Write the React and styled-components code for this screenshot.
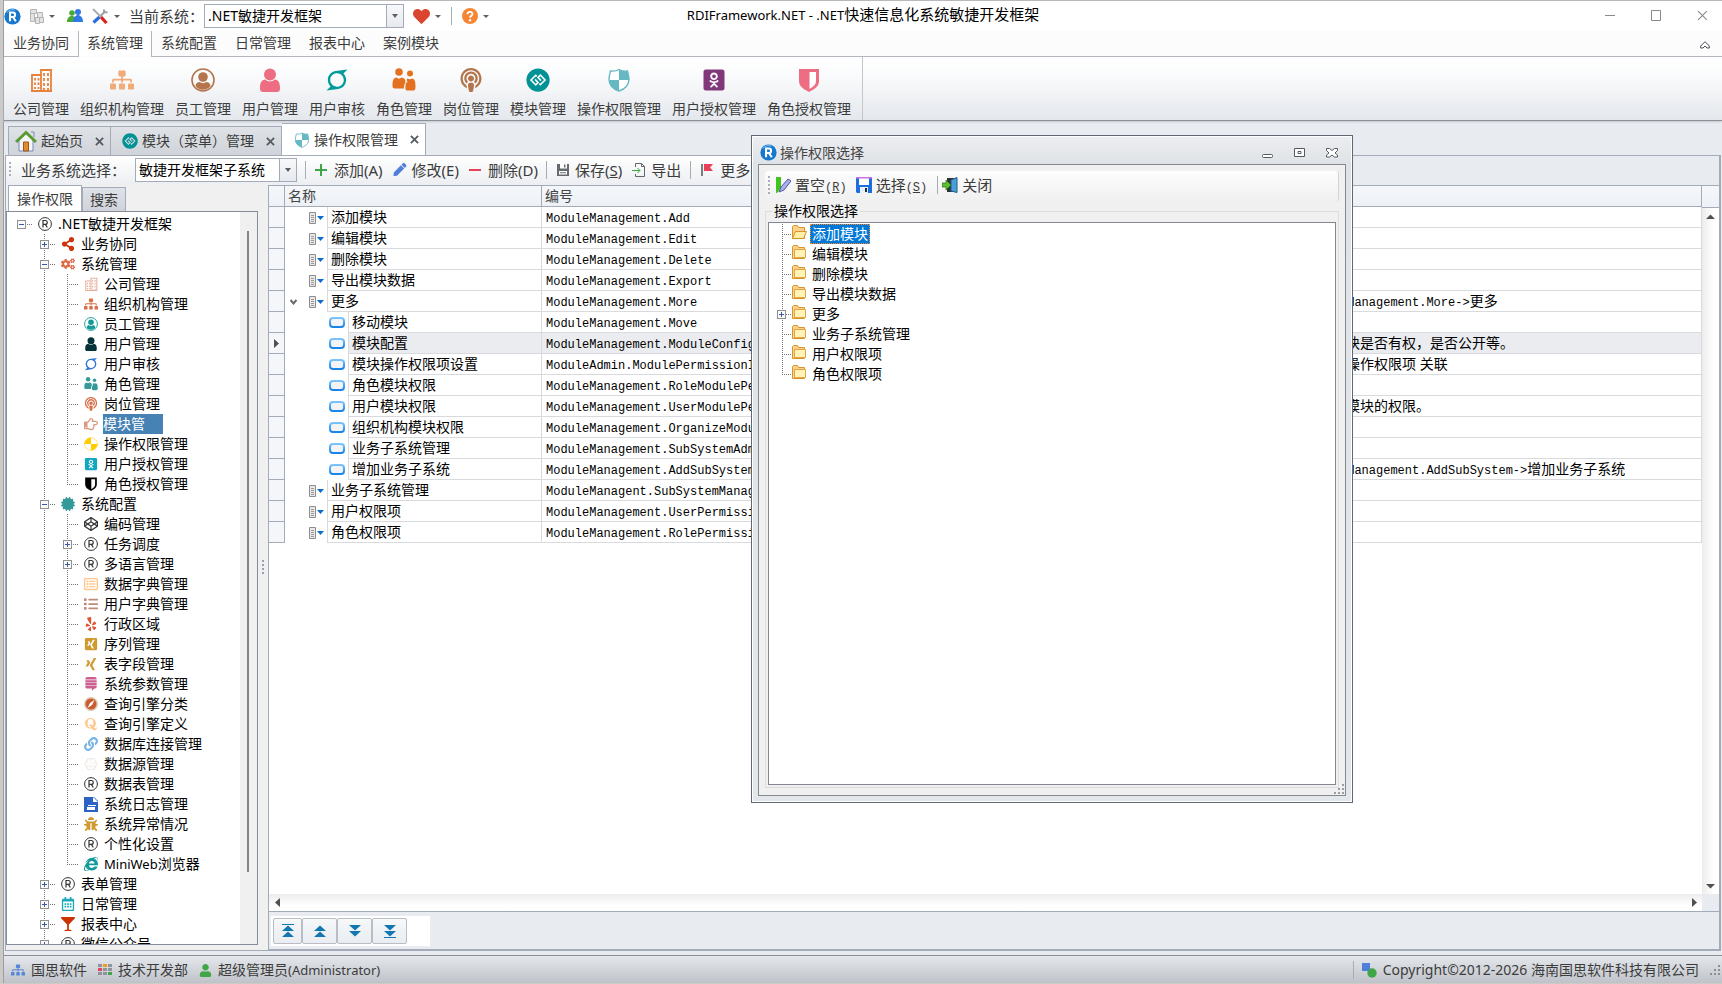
import React, { useState } from 'react';
import styled, { createGlobalStyle, css } from 'styled-components';
import {
  FaShareAlt, FaCogs, FaSitemap, FaUser, FaPodcast, FaRegHandPointRight,
  FaOdnoklassnikiSquare, FaCertificate, FaCodepen, FaRegListAlt, FaList, FaYelp,
  FaXingSquare, FaXing, FaStackExchange, FaQuora, FaLink, FaConnectdevelop, FaBug,
  FaInternetExplorer, FaRegCalendarAlt, FaGlassMartini, FaGgCircle, FaSuperpowers, FaHeart,
  FaPen,
} from 'react-icons/fa';

const latin = "'Noto Sans', 'Noto Sans CJK SC', sans-serif";
const mono = "'Liberation Mono', 'Noto Sans CJK SC', monospace";

const GlobalStyle = createGlobalStyle`
  * { box-sizing: border-box; }
  body {
    margin: 0;
    background: #cbcac7;
    color: #000;
    font: 14px/20px ${latin};
  }
  button, select { font: inherit; color: inherit; }
  button { padding: 0; border: 0; background: none; white-space: nowrap; }
  ul { margin: 0; padding: 0; list-style: none; }
`;

const Frame = styled.div`
  height: 100vh;
  padding: 0 0 1px 3px;
`;
const Window = styled.div`
  position: relative;
  display: flex;
  flex-direction: column;
  height: 100%;
  border-top: 1px solid #b9b9b9;
  border-left: 1px solid #9a9da3;
  background: #e8ebf0;
`;
const Small = styled.span`
  font-size: 13px;
`;

/* ---------- title bar ---------- */
const TitleBar = styled.header`
  display: grid;
  grid-template-columns: 1fr auto 1fr;
  align-items: center;
  flex: none;
  height: 30px;
  background: #fff;
`;
const QuickBar = styled.div`
  display: flex;
  align-items: center;
  color: #3c3c3c;
  font-size: 15px;
`;
const QuickButton = styled.button`
  display: flex;
  align-items: center;
  gap: 5px;
  margin-right: ${p => p.$after || 0}px;
`;
const Title = styled.h1`
  margin: 0;
  font-size: 15px;
  font-weight: 400;
  line-height: 26px;
  align-self: start;
`;
const WindowButtons = styled.div`
  display: flex;
  justify-content: flex-end;
  gap: 30px;
  padding-right: 12px;

  button { width: 16px; }
`;
const Divider = styled.span`
  flex: none;
  width: 1px;
  height: ${p => p.$h || 18}px;
  margin: 0 ${p => p.$gap || 9}px;
  background: #a9adb3;
`;
const Arrow = styled.span`
  border: 3px solid transparent;
  border-top-color: #5c5f66;
  border-bottom: 0;
`;

const ComboBox = styled.span`
  display: flex;
  align-items: stretch;
  position: relative;
  width: ${p => p.$w}px;
  height: 24px;
  border: 1px solid #a3abb8;
  background: #fff;
  color: #000;
  font-size: 14px;

  select {
    flex: 1;
    padding: 0 3px;
    border: 0;
    background: transparent;
    appearance: none;
    outline: none;
    line-height: 22px;
  }
  &::before {
    content: '';
    position: absolute;
    right: 0;
    width: 16px;
    height: 100%;
    border-left: 1px solid #a3abb8;
    background: linear-gradient(#f7f8fa, #e6e9ee);
  }
  &::after {
    content: '';
    position: absolute;
    right: 5px;
    top: 9px;
    border: 3px solid transparent;
    border-top: 4px solid #5c5f66;
    border-bottom: 0;
  }
`;

/* ---------- ribbon ---------- */
const RibbonTabs = styled.nav`
  display: flex;
  flex: none;
  height: 26px;
  border-bottom: 1px solid #b2b5bc;
  background: #fcfcfc;
  color: #3c3c3c;
`;
const RibbonTab = styled.button`
  width: 74px;
  height: 26px;
  padding-bottom: 2px;
  border: 1px solid transparent;
  border-width: 0 1px;
  line-height: 24px;
  ${p => p.$active && css`
    border-color: #b2b5bc;
    background: #fff;
  `}
`;
const Collapse = styled.button`
  margin-left: auto;
  padding-right: 12px;
`;
const Ribbon = styled.div`
  display: flex;
  flex: none;
  height: 64px;
  border-bottom: 1px solid #8b9098;
  background: linear-gradient(#fff, #fafbfc 30%, #e4e7ec);
  box-shadow: 0 1px 2px #c3c6cc;
  color: #3c3c3c;
`;
const RibbonGroup = styled.div`
  display: flex;
  gap: 11px;
  padding: 0 11px 0 9px;
  border-right: 1px solid #c3c7cd;
`;
const RibbonItem = styled.button`
  display: flex;
  flex-direction: column;
  align-items: center;
  padding-top: 11px;
  gap: 7px;
`;

/* ---------- document tabs ---------- */
const DocTabs = styled.div`
  display: flex;
  align-items: flex-end;
  flex: none;
  height: 34px;
  padding-left: 4px;
  color: #3c3c3c;
`;
const DocTab = styled.div`
  display: flex;
  align-items: center;
  height: ${p => (p.$active ? 32 : 29)}px;
  padding: 0 6px 0 ${p => p.$pad}px;
  border: 1px solid #a3abb8;
  border-bottom: 0;
  border-left-width: ${p => (p.$first ? 1 : 0)}px;
  background: ${p => (p.$active ? '#fff' : 'linear-gradient(#dfe2e7, #d0d4da)')};

  > button:first-child { display: flex; align-items: center; gap: 4px; }
`;
const CloseTab = styled.button`
  display: flex;
  margin-left: 12px;
`;
const Document = styled.main`
  display: flex;
  flex-direction: column;
  flex: 1;
  min-height: 0;
  margin: 0 1px 2px 1px;
  border: 1px solid #a3abb8;
  border-right-width: 2px;
`;
const ToolBar = styled.div`
  display: flex;
  align-items: center;
  flex: none;
  width: 64%;
  height: 29px;
  padding-bottom: 2px;
  background: linear-gradient(#fff, #eceef1);
  color: #3c3c3c;
  font-size: 15px;
`;
const Grip = styled.span`
  flex: none;
  width: 2px;
  height: 15px;
  margin: 0 10px 0 3px;
  background: repeating-linear-gradient(#a9adb5 0 2px, transparent 2px 4px);
`;
const ToolButton = styled.button`
  display: flex;
  align-items: center;
  gap: 4px;
  margin-right: ${p => (p.$last ? 0 : 9)}px;

  svg { min-width: 16px; }
`;
const Split = styled.div`
  display: flex;
  flex: 1;
  min-height: 0;
`;

/* ---------- left panel ---------- */
const Side = styled.aside`
  display: flex;
  flex-direction: column;
  flex: none;
  width: 252px;
  padding-bottom: 5px;
  background: #f0f0f0;
`;
const SideTabs = styled.div`
  display: flex;
  align-items: flex-end;
  flex: none;
  height: 26px;
  padding-left: 2px;
  color: #3c3c3c;
`;
const SideTab = styled.button`
  height: ${p => (p.$active ? 26 : 24)}px;
  padding: 0 ${p => (p.$active ? 8 : 7)}px;
  border: 1px solid #a3abb8;
  border-bottom: 0;
  background: ${p => (p.$active ? '#fff' : 'linear-gradient(#dfe2e7, #cfd3d9)')};
`;
const TreeBox = styled.div`
  display: flex;
  flex: 1;
  min-height: 0;
  border: 1px solid #868b99;
  background: #fff;
  overflow: hidden;
`;
const Tree = styled.ul`
  flex: 1;
  padding: 2px 0 0 3px !important;
`;
const TreeScroll = styled.div`
  width: 17px;
  padding: 19px 0 72px 7px;
  background: #f0f0f0;

  &::before {
    content: '';
    display: block;
    width: 2px;
    height: 100%;
    background: #858585;
  }
`;
const Row = styled.li`
  display: flex;
  height: 20px;
  white-space: nowrap;
`;
const dots = dir => `repeating-linear-gradient(${dir}, #777 0 1px, transparent 1px 2px)`;
const Guide = styled.span`
  display: flex;
  align-items: center;
  justify-content: center;
  flex: none;
  width: ${p => p.$w || 23}px;
  background:
    ${dots('to bottom')} 11px 0 / 1px ${p => p.$v || 0} no-repeat,
    ${dots('to right')} 11px 10px / ${p => (p.$h ? '100%' : '0')} 1px no-repeat;
`;
const TreeIcon = styled.span`
  display: flex;
  align-items: center;
  justify-content: center;
  flex: none;
  width: 23px;
  color: ${p => p.$color};
`;
const TreeLabel = styled.span`
  margin-left: 2px;
  ${p => p.$selected && css`
    width: 60px;
    margin-left: 1px;
    background: #4682b4;
    color: #fff;
  `}
`;
const Expander = styled.button`
  display: flex;
  align-items: center;
  justify-content: center;
  width: 9px;
  height: 9px;
  border: 1px solid #919191;
  background: #fafafa;
`;
const Splitter = styled.div`
  display: flex;
  align-items: center;
  justify-content: center;
  flex: none;
  width: 10px;
  background: #f0f0f0;

  &::before {
    content: '';
    width: 2px;
    height: 15px;
    background: repeating-linear-gradient(#9aa1ae 0 2px, transparent 2px 4px);
  }
`;

/* ---------- grid ---------- */
const GridPane = styled.section`
  display: flex;
  flex-direction: column;
  flex: 1;
  min-width: 0;
  border-left: 1px solid #a3abb8;
  border-top: 1px solid #a3abb8;
`;
const GridBody = styled.div`
  display: flex;
  flex: 1;
  min-height: 0;
  background: #fff;
`;
const Table = styled.table`
  flex: 1;
  align-self: flex-start;
  width: 0;
  table-layout: fixed;
  border-collapse: separate;
  border-spacing: 0;
  line-height: 16px;

  th, td { height: 21px; padding: 0; overflow: hidden; white-space: nowrap; text-align: left; }
  th {
    padding-left: 3px;
    border: 1px solid #a3abb8;
    border-width: 0 1px 1px 0;
    background: linear-gradient(#f5f7fa, #edf1f6);
    color: #444;
    font-weight: 400;
  }
`;
const Indicator = styled.td`
  border: 1px solid #a3abb8;
  border-width: 0 1px 1px 0;
  background: #f5f6f9;

  svg { display: block; margin: 0 auto; }
`;
const NameCell = styled.div`
  display: flex;
  height: 21px;
`;
const NameLead = styled.span`
  display: flex;
  align-items: center;
  justify-content: flex-end;
  flex: none;
  gap: 12px;
  width: ${p => (p.$child ? 63 : 42)}px;
  padding-right: 3px;
`;
const NameText = styled.span`
  flex: 1;
  padding-left: 3px;
  border: 1px solid #d8dade;
  border-width: 0 1px 1px 1px;
  background: ${p => (p.$selected ? '#ebecef' : '#fff')};
  line-height: 19px;
`;
const DataCell = styled.td`
  padding-left: 4px !important;
  border: 1px solid #d8dade;
  border-width: 0 1px 1px 0;
  background: ${p => (p.$selected ? '#ebecef' : '#fff')};
`;
const Code = styled.span`
  font-family: ${mono};
  font-size: 12px;
  line-height: 12px;
`;
const VScroll = styled.div`
  display: flex;
  flex-direction: column;
  align-items: center;
  flex: none;
  width: 17px;
  padding-bottom: 3px;
  background: linear-gradient(to right, #ececec, #fff 70%);

  &::before {
    content: '';
    flex: none;
    width: 17px;
    height: 21px;
    margin-bottom: 4px;
    border-bottom: 1px solid #a3abb8;
    background: linear-gradient(#f5f7fa, #edf1f6);
  }
  svg:last-child { margin-top: auto; }
`;
const HScroll = styled.div`
  display: flex;
  align-items: center;
  justify-content: space-between;
  flex: none;
  height: 18px;
  padding: 0 20px 0 4px;
  border-bottom: 1px solid #a3abb8;
  background:
    linear-gradient(#e8ebf0, #e8ebf0) right / 17px 100% no-repeat,
    linear-gradient(#ececec, #fff 70%);
`;
const Pager = styled.div`
  flex: none;
  padding: 4px 2px 3px;
  border-bottom: 1px solid #a3abb8;
`;
const PagerBox = styled.div`
  display: flex;
  width: 159px;
  padding: 2px;
  background: #fff;
`;
const PagerButton = styled.button`
  display: flex;
  align-items: center;
  justify-content: center;
  width: ${p => (p.$first ? 29 : 35)}px;
  height: 26px;
  border: 1px solid #b9bec5;
  border-radius: 2px;
  background: linear-gradient(#f6f8fa, #e9edf1);
`;

/* ---------- status bar ---------- */
const StatusBar = styled.footer`
  display: flex;
  align-items: center;
  flex: none;
  height: 28px;
  margin-top: 2px;
  padding: 1px 1px 0 7px;
  border-top: 1px solid #8b9098;
  background: linear-gradient(#e4e7eb, #bfc3c9);
  color: #3c3c3c;
`;
const StatusItem = styled.span`
  display: flex;
  align-items: center;
  gap: 6px;
  margin-right: ${p => p.$after || 0}px;
  margin-left: ${p => (p.$right ? 'auto' : 0)};
`;

/* ---------- dialog ---------- */
const Dialog = styled.section`
  position: absolute;
  left: 747px;
  top: 134px;
  display: flex;
  flex-direction: column;
  width: 602px;
  height: 668px;
  padding: 0 6px 6px;
  border: 1px solid #5f6873;
  background: linear-gradient(#eceef1, #dfe2e6 28px, #e3e6ea);
  box-shadow: inset 0 0 0 1px #fff;
`;
const DialogTitle = styled.div`
  display: flex;
  align-items: center;
  flex: none;
  height: 28px;
  padding: 5px 8px 0 2px;
  gap: 3px;
  color: #444;

  h2 { margin: 0 auto 0 0; font-size: 14px; font-weight: 400; }
`;
const DialogButton = styled.button`
  display: flex;
  margin-left: 17px;
`;
const DialogBody = styled.div`
  position: relative;
  display: flex;
  flex-direction: column;
  flex: 1;
  min-height: 0;
  padding: 6px 6px 7px;
  border: 1px solid #848990;
  background: #f0f0f0;
`;
const SizeGrip = styled.svg`
  position: absolute;
  right: 1px;
  bottom: 1px;
`;
const DialogTools = styled.div`
  display: flex;
  align-items: center;
  flex: none;
  height: 30px;
  padding-bottom: 2px;
  border-right: 1px solid #d0d2d5;
  border-radius: 3px;
  background: linear-gradient(#fdfdfd, #f0f0f0);
  color: #3c3c3c;
  font-size: 15px;

  ${Grip} { height: 19px; margin-right: 5px; }
  ${Divider} { margin: 0 4px 0 1px; }
`;
const Group = styled.fieldset`
  display: flex;
  flex: 1;
  min-width: 0;
  margin: 0;
  padding: 1px 2px 2px;
  border: 1px solid #dcdcdc;

  legend { margin-left: 4px; padding: 0 2px; line-height: 20px; }
`;
const DialogTree = styled.ul`
  flex: 1;
  padding: 1px 0 0 2px !important;
  border: 1px solid #828790;
  background: #fff;
`;
const DialogLabel = styled.span`
  margin-left: 3px;
  padding: 0 2px;
  ${p => p.$selected && css`
    background: #0078d7;
    color: #fff;
    outline: 1px dotted #ff8728;
    outline-offset: -1px;
  `}
`;

/* ---------- drawings ---------- */
const Logo = ({ size = 17 }) => (
  <svg width={size} height={size} viewBox="0 0 18 18">
    <circle cx="9" cy="9" r="8.6" fill="#1677cf" />
    <path d="M3 5a7 7 0 0 1 9-2.600" stroke="#7cc0f5" fill="none" />
    <path d="M6.400 14V4.800h3a2.300 2.300 0 0 1 0 4.700H7.500m2 0L12.500 14" fill="none" stroke="#fff" strokeWidth="2.200" />
  </svg>
);
const People = () => (
  <svg width="16" height="14" viewBox="0 0 16 14">
    <circle cx="5" cy="4" r="2.800" fill="#49a832" /><path d="M0 13c0-5 3-6 5-6s4 1 4 6z" fill="#49a832" />
    <circle cx="11" cy="3" r="3" fill="#2f7ae5" /><path d="M6 13c0-5 3-7 5-7s5 2 5 7z" fill="#2f7ae5" />
  </svg>
);
const Blocks = () => (
  <svg width="14" height="15" viewBox="0 0 14 15" fill="#e3e3e3" stroke="#b5b5b5">
    <path d="M.5.5h6v4h-6zM.5 4.500h4v8h-4zM7.500 3.500h5v5h-5zM5.500 8.500h4v6h-4zM9.500 8.500h4v5h-4z" />
  </svg>
);
const Tools = () => (
  <svg width="17" height="16" viewBox="0 0 17 16" fill="none">
    <path d="M1.500 14.500 7.500 9" stroke="#2b6ce0" strokeWidth="3.200" />
    <path d="M8 8.500l4.500-4.500M12 1.500v2.800h3.500" stroke="#9aa0a5" strokeWidth="2" />
    <path d="M1 1l8 8" stroke="#a8acb0" strokeWidth="2" /><path d="M9 9l5.500 6" stroke="#d8241c" strokeWidth="3.200" />
  </svg>
);
const Help = () => (
  <svg width="16" height="16" viewBox="0 0 16 16">
    <circle cx="8" cy="8" r="8" fill="#f58634" />
    <path d="M5.500 6.200c0-3 5-3 5-.200 0 1.800-2.500 1.700-2.500 3.700" fill="none" stroke="#fff" strokeWidth="1.800" />
    <circle cx="8" cy="12.200" r="1.200" fill="#fff" />
  </svg>
);
const Building = () => (
  <svg width="1em" height="1em" viewBox="0 0 24 24" fill="none" stroke="currentColor" strokeWidth="1.800">
    <path d="M3 23V7h9m0 16V2h10v21M2 23h21" />
    <path d="M15 5v3m4-3v3m-4 2v3m4-3v3m-4 2v3m4-3v3M6 10v2.500m3.500-2.500v2.500M6 14.500V17m3.500-2.500V17M6 19v2m3.500-2v2m5.500-1v3m4-3v3" />
  </svg>
);
const UserRing = () => (
  <svg width="1em" height="1em" viewBox="0 0 24 24">
    <circle cx="12" cy="12" r="11" fill="none" stroke="currentColor" strokeWidth="1.600" />
    <circle cx="12" cy="9" r="4.800" fill="currentColor" />
    <path d="M4.500 18c.5-3 2-4 4-4 2 1.500 5 1.500 7 0 2 0 3.500 1 4 4-4 5-11 5-15 0z" fill="currentColor" />
  </svg>
);
const UserBust = () => (
  <svg width="1em" height="1em" viewBox="0 0 24 24" fill="currentColor">
    <circle cx="12" cy="6.500" r="6" /><path d="M2 20c0-6 2-8 5-8.500 3 2.500 7 2.500 10 0 3 .5 5 2.500 5 8.500 0 3-1 4-3 4H5c-2 0-3-1-3-4z" />
  </svg>
);
const Pair = () => (
  <svg width="1em" height="1em" viewBox="0 0 24 24" fill="currentColor">
    <circle cx="7" cy="4" r="3.800" /><path d="M.5 18c0-6 1-8 4-8.500 2 1.500 3 1.500 5 0 3 .5 4 2 4 5-1 1-1.500 3-1.500 6H3c-2 0-2.500-1-2.500-2.500z" />
    <circle cx="18" cy="5.500" r="3" /><path d="M13.500 21c0-5 0-6 2-7-1-1-1-3 0-3.500 2 1 3 1 4.500 0 3 .5 3.500 3 3.500 8.500 0 3-1 3.500-3 3.500h-4.500c-1.500 0-2.500 0-2.500-1.500z" />
  </svg>
);
const QuarterShield = () => (
  <svg width="1em" height="1em" viewBox="0 0 24 24">
    <path d="M12 1.500c2.500 1.500 5 2 8.500 1.500.5 3 1.500 5 1.500 8 0 6-4 10-10 12C6 21 2 17 2 11c0-3 1-5 1.500-8 3.500.5 6 0 8.500-1.500z" fill="#fff" stroke="currentColor" strokeWidth="1.400" />
    <path d="M12 1.500c2.500 1.500 5 2 8.500 1.500.5 3 1.500 5 1.500 9H12zM2 12h10v11C6 21 2 17 2 12z" fill="currentColor" />
  </svg>
);
const HalfShield = () => (
  <svg width="1em" height="1em" viewBox="0 0 24 24">
    <path d="M2 1h20v12c0 5-4 8-10 11C6 21 2 18 2 13z" fill="currentColor" />
    <path d="M12.500 4H19v9c0 3-2 5.500-6.500 8z" fill="#fff" />
  </svg>
);
const QuarterBall = () => (
  <svg width="14" height="14" viewBox="0 0 14 14">
    <circle cx="7" cy="7" r="6.400" fill="#fff" stroke="#ffe27a" />
    <path d="M7 7V.500A6.500 6.500 0 0 0 .5 7zM7 7v6.500A6.500 6.500 0 0 0 13.500 7z" fill="#fc0" />
  </svg>
);
const Compass = () => (
  <svg width="14" height="14" viewBox="0 0 14 14">
    <circle cx="7" cy="7" r="6.200" fill="#cc5a33" stroke="#d9c9ae" strokeWidth="1.400" />
    <path d="M10.500 3 8 8l-4.500 3L6 6z" fill="#fff" />
  </svg>
);
const Registered = () => (
  <svg width="14" height="14" viewBox="0 0 14 14" fill="none" stroke="#333">
    <circle cx="7" cy="7" r="6.400" />
    <path d="M5 10.500v-7h2.300a1.900 1.900 0 0 1 0 3.900H5m2.300 0 2 3.100" strokeWidth="1.200" />
  </svg>
);
const LogFile = () => (
  <svg width="14" height="15" viewBox="0 0 14 15">
    <path d="M0 0h10l4 4v11H0z" fill="#2d62c4" /><path d="M9 0v5h5z" fill="#fff" /><path d="M4 8h8v1H4zM3 10h8v3H3z" fill="#fff" />
  </svg>
);
const House = () => (
  <svg width="22" height="22" viewBox="0 0 22 22">
    <path d="M4 10v11h14V10l-7-7z" fill="#f3f5fa" stroke="#7a88bb" />
    <path d="M8.500 12h5v9h-5z" fill="#e58a2c" stroke="#9a5a14" />
    <path d="M1 12 11 2.500 21 12" fill="none" stroke="#5b9a2f" strokeWidth="3" /><path d="M16 2h3v5" stroke="#7a88bb" fill="none" />
  </svg>
);
const Cross = ({ thin }) => (
  <svg width={thin ? 11 : 9} height={thin ? 11 : 9} viewBox="0 0 10 10">
    <path d="M1 1l8 8M9 1 1 9" stroke={thin ? '#8a8a8a' : '#555a62'} strokeWidth={thin ? 1 : 2} />
  </svg>
);
const Plus = () => <svg width="14" height="14"><path d="M1 7h12M7 1v12" stroke="#3fa648" strokeWidth="2" /></svg>;
const Minus = () => <svg width="14" height="14"><path d="M1 7h12" stroke="#e9415a" strokeWidth="2" /></svg>;
const SaveIcon = () => (
  <svg width="16" height="14" viewBox="0 0 16 14">
    <path d="M2 1h12v12H2z" fill="#666a70" /><path d="M5 1h7v4.500H5zM4 8h8v3.500H4z" fill="#fff" /><path d="M9 1.500h1.500v3H9zM5 9.300h6v1H5z" fill="#666a70" />
  </svg>
);
const ExportIcon = () => (
  <svg width="16" height="16" fill="none">
    <path d="M4.500 5V1.500h6l3 3v10h-9V12" stroke="#666" /><path d="M10.500 1.500v3h3" stroke="#666" />
    <path d="M1 8.500h8M6.500 6 9 8.500 6.500 11" stroke="#3fa648" />
  </svg>
);
const Flag = () => (
  <svg width="14" height="14"><path d="M2 1v12" stroke="#555" strokeWidth="1.500" /><path d="M4 1h9l-3 3.500L13 8H4z" fill="#e9415a" /></svg>
);
const MenuIcon = () => (
  <svg width="15" height="12" viewBox="0 0 15 12">
    <path d="M.5.5h6v11h-6z" fill="#e9e9e9" stroke="#8d8d8d" /><path d="M2 3.500h3M2 5.500h3M2 7.500h3M2 9.500h3" stroke="#9a9a9a" />
    <path d="M8 4h7l-3.500 4z" fill="#0a6ccf" />
  </svg>
);
const PillIcon = () => (
  <svg width="16" height="11" viewBox="0 0 16 11">
    <defs>
      <linearGradient id="pill" x2="0" y2="1"><stop stopColor="#7cc4fb" /><stop offset="1" stopColor="#1683e8" /></linearGradient>
    </defs>
    <rect x="1" y="1" width="14" height="9" rx="3" fill="#f2f4f7" stroke="url(#pill)" strokeWidth="2" />
  </svg>
);
const Triangle = ({ dir }) => {
  const d = { up: 'M0 7l4.500-4.500L9 7z', down: 'M0 2h9L4.500 6.500z', left: 'M7 0v9L2 4.500z', right: 'M2 0v9l5-4.500z' }[dir];
  return <svg width="9" height="9" viewBox="0 0 9 9"><path d={d} fill="#505050" /></svg>;
};
const PagerIcon = ({ end, down }) => (
  <svg width="12" height="14" viewBox="0 0 12 14" fill="#1377b0">
    <g transform={down ? 'rotate(180 6 7)' : undefined}>
      {end && <path d="M0 0h12v1H0z" />}
      <path d="M6 1.500l6 5.500H0zM6 7.500l6 5.500H0z" />
    </g>
  </svg>
);
const Folder = ({ open }) => (
  <svg width="16" height="16" viewBox="0 0 16 16">
    <path d="M1.500 14.500v-12l1-1h4l1 2h6v11z" fill="#ffd08a" stroke="#d8942f" />
    {open
      ? <path d="M1.500 14.500l3-7h11l-3 7z" fill="#fff0a8" stroke="#d8942f" />
      : <path d="M3.500 5.500h11v8h-11z" fill="#fff3b8" stroke="#e0a646" />}
  </svg>
);
const ClearIcon = () => (
  <svg width="16" height="17" viewBox="0 0 16 17">
    <path d="M1 0h5v11l-4 5H1z" fill="#43c41c" /><path d="M4 15l2-5 7-8 3 2-7 9z" fill="#aab0ec" stroke="#5357a5" />
  </svg>
);
const Floppy = () => (
  <svg width="16" height="16" viewBox="0 0 16 16">
    <path d="M0 0h16v16H1l-1-1z" fill="#1d6fe0" /><path d="M3 1h10v7H3z" fill="#fff" /><path d="M0 0h16v1.500H0z" fill="#c774e8" />
    <path d="M4 10h8v6H4z" fill="#e8eefb" /><path d="M9 11h2v4H9z" fill="#134" />
  </svg>
);
const ExitIcon = () => (
  <svg width="16" height="16" viewBox="0 0 16 16">
    <path d="M5 1h10v14H5z" fill="#333" /><path d="M9 3l6-2.500v15L9 14z" fill="#4a9fd8" stroke="#1e5c8a" />
    <path d="M0 6h4V3l5 5-5 5v-3H0z" fill="#5cc12e" stroke="#2c6e12" strokeWidth=".7" />
  </svg>
);
const gripDots = 'M8 0h2v2H8zM4 4h2v2H4zM8 4h2v2H8zM0 8h2v2H0zM4 8h2v2H4zM8 8h2v2H8z';

/* ---------- data ---------- */
const ribbonTabs = ['业务协同', '系统管理', '系统配置', '日常管理', '报表中心', '案例模块'];

const ribbonItems = [
  ['公司管理', Building, '#e8823a'],
  ['组织机构管理', FaSitemap, '#f0ab78'],
  ['员工管理', UserRing, '#b4744c'],
  ['用户管理', UserBust, '#ed6d82'],
  ['用户审核', FaSuperpowers, '#009a9a'],
  ['角色管理', Pair, '#e4711f'],
  ['岗位管理', FaPodcast, '#b4744c'],
  ['模块管理', FaGgCircle, '#009294'],
  ['操作权限管理', QuarterShield, '#66b9c2'],
  ['用户授权管理', FaOdnoklassnikiSquare, '#80387a'],
  ['角色授权管理', HalfShield, '#ed6d82'],
];

// [level, label, icon, colour, expander, last child]
const tree = [
  [0, '.NET敏捷开发框架', Registered, '#333', '-'],
  [1, '业务协同', FaShareAlt, '#d0340f', '+'],
  [1, '系统管理', FaCogs, '#e06a48', '-'],
  [2, '公司管理', Building, '#e6b09c'],
  [2, '组织机构管理', FaSitemap, '#d8704a'],
  [2, '员工管理', UserRing, '#139a9a'],
  [2, '用户管理', UserBust, '#053238'],
  [2, '用户审核', FaSuperpowers, '#2f7ad0'],
  [2, '角色管理', Pair, '#339999'],
  [2, '岗位管理', FaPodcast, '#d8704a'],
  [2, '模块管', FaRegHandPointRight, '#dc9a80'],
  [2, '操作权限管理', QuarterBall, '#fc0'],
  [2, '用户授权管理', FaOdnoklassnikiSquare, '#14a5c0'],
  [2, '角色授权管理', HalfShield, '#000', '', true],
  [1, '系统配置', FaCertificate, '#339999', '-'],
  [2, '编码管理', FaCodepen, '#333'],
  [2, '任务调度', Registered, '#333', '+'],
  [2, '多语言管理', Registered, '#333', '+'],
  [2, '数据字典管理', FaRegListAlt, '#ffc68c'],
  [2, '用户字典管理', FaList, '#bf8a7a'],
  [2, '行政区域', FaYelp, '#dd5533'],
  [2, '序列管理', FaXingSquare, '#cf9a30'],
  [2, '表字段管理', FaXing, '#cf9a30'],
  [2, '系统参数管理', FaStackExchange, '#cc5f90'],
  [2, '查询引擎分类', Compass, '#cc5530'],
  [2, '查询引擎定义', FaQuora, '#ffc68c'],
  [2, '数据库连接管理', FaLink, '#79b4e6'],
  [2, '数据源管理', FaConnectdevelop, '#e4dcd6'],
  [2, '数据表管理', Registered, '#333'],
  [2, '系统日志管理', LogFile, '#2d62c4'],
  [2, '系统异常情况', FaBug, '#cf9a30'],
  [2, '个性化设置', Registered, '#333'],
  [2, <><Small>MiniWeb</Small>浏览器</>, FaInternetExplorer, '#139a9a', '', true],
  [1, '表单管理', Registered, '#333', '+'],
  [1, '日常管理', FaRegCalendarAlt, '#1fa9b8', '+'],
  [1, '报表中心', FaGlassMartini, '#cc3300', '+'],
  [1, '微信公众号', Registered, '#333', '+'],
];

// [child, name, code, description code, description]
const rows = [
  [0, '添加模块', 'ModuleManagement.Add'],
  [0, '编辑模块', 'ModuleManagement.Edit'],
  [0, '删除模块', 'ModuleManagement.Delete'],
  [0, '导出模块数据', 'ModuleManagement.Export'],
  [0, '更多', 'ModuleManagement.More', 'ModuleManagement.More->', '更多'],
  [1, '移动模块', 'ModuleManagement.Move'],
  [1, '模块配置', 'ModuleManagement.ModuleConfig', '', '配置模块是否有权，是否公开等。'],
  [1, '模块操作权限项设置', 'ModuleAdmin.ModulePermissionItem', '', '模块与操作权限项 关联'],
  [1, '角色模块权限', 'ModuleManagement.RoleModulePermission'],
  [1, '用户模块权限', 'ModuleManagement.UserModulePermission', '', '用户对模块的权限。'],
  [1, '组织机构模块权限', 'ModuleManagement.OrganizeModulePermission'],
  [1, '业务子系统管理', 'ModuleManagement.SubSystemAdmin'],
  [1, '增加业务子系统', 'ModuleManagement.AddSubSystem', 'ModuleManagement.AddSubSystem->', '增加业务子系统'],
  [0, '业务子系统管理', 'ModuleManagent.SubSystemManagement'],
  [0, '用户权限项', 'ModuleManagement.UserPermission'],
  [0, '角色权限项', 'ModuleManagement.RolePermission'],
];

const permissions = ['添加模块', '编辑模块', '删除模块', '导出模块数据', '更多', '业务子系统管理', '用户权限项', '角色权限项'];

const Toggle = ({ sign }) => (
  <Expander aria-label={sign === '+' ? '展开' : '折叠'}>
    <svg width="5" height="5"><path d={sign === '+' ? 'M0 2.500h5M2.500 0v5' : 'M0 2.500h5'} stroke="#3a5aa8" /></svg>
  </Expander>
);

function TreeRow({ level, label, Icon, color, sign, last }) {
  return (
    <Row>
      {level > 0 && <Guide />}
      {level > 1 && <Guide $v="100%" />}
      <Guide $h $v={level === 0 ? '0' : last ? '10px' : '100%'}>{sign && <Toggle sign={sign} />}</Guide>
      <TreeIcon $color={color}>
        <svg width="14" height="15" fontSize="14"><Icon size={14} /></svg>
      </TreeIcon>
      <TreeLabel $selected={label === '模块管'}>{label}</TreeLabel>
    </Row>
  );
}

export default function App() {
  const [tab, setTab] = useState('系统管理');
  const [picked, setPicked] = useState('添加模块');

  return (
    <Frame>
      <GlobalStyle />
      <Window>
        <TitleBar>
          <QuickBar>
            <QuickButton $after={9} aria-label="系统"><Logo /></QuickButton>
            <QuickButton $after={12} aria-label="布局"><Blocks /><Arrow /></QuickButton>
            <QuickButton $after={9} aria-label="用户"><People /></QuickButton>
            <QuickButton $after={9} aria-label="工具"><Tools /><Arrow /></QuickButton>
            <label htmlFor="system">当前系统：</label>
            <ComboBox $w={200}>
              <select id="system"><option>.NET敏捷开发框架</option></select>
            </ComboBox>
            <Divider $gap={4} style={{ visibility: 'hidden' }} />
            <QuickButton aria-label="收藏"><FaHeart size={17} color="#d9452f" /><Arrow /></QuickButton>
            <Divider $gap={10} />
            <QuickButton aria-label="帮助"><Help /><Arrow /></QuickButton>
          </QuickBar>
          <Title><Small>RDIFramework.NET - .NET</Small>快速信息化系统敏捷开发框架</Title>
          <WindowButtons>
            <button aria-label="最小化"><svg width="16" height="11"><path d="M3 5.500h10" stroke="#8a8a8a" /></svg></button>
            <button aria-label="最大化"><svg width="16" height="11"><path d="M3.500.5h9v10h-9z" stroke="#8a8a8a" fill="none" /></svg></button>
            <button aria-label="关闭"><Cross thin /></button>
          </WindowButtons>
        </TitleBar>

        <RibbonTabs>
          {ribbonTabs.map(t => (
            <RibbonTab key={t} $active={t === tab} onClick={() => setTab(t)}>{t}</RibbonTab>
          ))}
          <Collapse aria-label="收起功能区">
            <svg width="10" height="8" fill="#fff" stroke="#4a4e56"><path d="M5 .7 9.300 5v2H7L5 5 3 7H.7V5z" /></svg>
          </Collapse>
        </RibbonTabs>
        <Ribbon>
          <RibbonGroup>
            {ribbonItems.map(([label, Icon, color]) => (
              <RibbonItem key={label}>
                <svg width="24" height="24" fontSize="24" color={color}><Icon size={24} /></svg>
                {label}
              </RibbonItem>
            ))}
          </RibbonGroup>
        </Ribbon>

        <DocTabs>
          <DocTab $first $pad={6}>
            <button><House />起始页</button>
            <CloseTab aria-label="关闭起始页"><Cross /></CloseTab>
          </DocTab>
          <DocTab $pad={11}>
            <button><FaGgCircle size={16} color="#009294" />模块（菜单）管理</button>
            <CloseTab aria-label="关闭模块管理"><Cross /></CloseTab>
          </DocTab>
          <DocTab $active $pad={12}>
            <button><svg width="16" height="16" fontSize="16" color="#66b9c2"><QuarterShield /></svg>操作权限管理</button>
            <CloseTab aria-label="关闭操作权限管理"><Cross /></CloseTab>
          </DocTab>
        </DocTabs>

        <Document>
          <ToolBar>
            <Grip />
            <label htmlFor="subsystem">业务系统选择：</label>
            <Divider $gap={4} style={{ visibility: 'hidden' }} />
            <ComboBox $w={162}>
              <select id="subsystem"><option>敏捷开发框架子系统</option></select>
            </ComboBox>
            <Divider $gap={8} />
            <ToolButton><Plus /><span>添加(A)</span></ToolButton>
            <ToolButton><FaPen size={13} color="#4f7fd8" /><span>修改(E)</span></ToolButton>
            <ToolButton $last><Minus /><span>删除(D)</span></ToolButton>
            <Divider $gap={8} />
            <ToolButton><SaveIcon /><span>保存(<u>S</u>)</span></ToolButton>
            <ToolButton $last><ExportIcon />导出</ToolButton>
            <Divider $gap={9} />
            <ToolButton><Flag />更多</ToolButton>
          </ToolBar>

          <Split>
            <Side>
              <SideTabs>
                <SideTab $active>操作权限</SideTab>
                <SideTab>搜索</SideTab>
              </SideTabs>
              <TreeBox>
                <Tree>
                  {tree.map(([level, label, Icon, color, sign, last], i) => (
                    <TreeRow key={i} level={level} label={label} Icon={Icon} color={color} sign={sign} last={last} />
                  ))}
                </Tree>
                <TreeScroll />
              </TreeBox>
            </Side>
            <Splitter />

            <GridPane>
              <GridBody>
                <Table>
                  <colgroup>
                    <col style={{ width: 16 }} />
                    <col style={{ width: 257 }} />
                    <col style={{ width: 758 }} />
                    <col />
                  </colgroup>
                  <thead>
                    <tr><th aria-label="行" /><th>名称</th><th>编号</th><th>描述</th></tr>
                  </thead>
                  <tbody>
                    {rows.map(([child, name, code, descCode, desc], i) => {
                      const selected = name === '模块配置';
                      return (
                        <tr key={i}>
                          <Indicator>{selected && <Triangle dir="right" />}</Indicator>
                          <td>
                            <NameCell>
                              <NameLead $child={child}>
                                {name === '更多' && (
                                  <svg width="7" height="6" fill="none"><path d="M.5 1 3.500 4.500 6.500 1" stroke="#6a6a6a" strokeWidth="2" /></svg>
                                )}
                                {child ? <PillIcon /> : <MenuIcon />}
                              </NameLead>
                              <NameText $selected={selected}>{name}</NameText>
                            </NameCell>
                          </td>
                          <DataCell $selected={selected}><Code>{code}</Code></DataCell>
                          <DataCell $selected={selected}><Code>{descCode}</Code>{desc}</DataCell>
                        </tr>
                      );
                    })}
                  </tbody>
                </Table>
                <VScroll><Triangle dir="up" /><Triangle dir="down" /></VScroll>
              </GridBody>
              <HScroll><Triangle dir="left" /><Triangle dir="right" /></HScroll>
              <Pager>
                <PagerBox>
                  <PagerButton $first aria-label="首条"><PagerIcon end /></PagerButton>
                  <PagerButton aria-label="上一条"><PagerIcon /></PagerButton>
                  <PagerButton aria-label="下一条"><PagerIcon down /></PagerButton>
                  <PagerButton aria-label="末条"><PagerIcon end down /></PagerButton>
                </PagerBox>
              </Pager>
            </GridPane>
          </Split>
        </Document>

        <StatusBar>
          <StatusItem $after={11}><FaSitemap size={14} color="#5586d8" />国思软件</StatusItem>
          <StatusItem $after={11}>
            <svg width="14" height="12" viewBox="0 0 14 12">
              <path d="M0 0h4v3H0zM10 0h4v3h-4zM5 4h4v3H5zM0 8h4v3H0zM5 8h4v3H5z" fill="#8f949c" />
              <path d="M5 0h4v3H5z" fill="#f59a1c" /><path d="M0 4h4v3H0z" fill="#e9415a" /><path d="M10 4h4v3h-4z" fill="#8f949c" /><path d="M10 8h4v3h-4z" fill="#3fa648" />
            </svg>
            技术开发部
          </StatusItem>
          <StatusItem><FaUser size={13} color="#3fa648" /><span>超级管理员<Small>(Administrator)</Small></span></StatusItem>
          <StatusItem $right $after={11}>
            <Divider $gap={2} />
            <svg width="15" height="15"><path d="M0 0h8v8H0z" fill="#4f7fd8" /><circle cx="10" cy="10" r="4.700" fill="#3fa648" /></svg>
            <span>Copyright©2012-2026 海南国思软件科技有限公司</span>
          </StatusItem>
          <svg width="11" height="11" fill="#8b9098"><path d={gripDots} /></svg>
        </StatusBar>

        <Dialog role="dialog" aria-labelledby="dialog-title">
          <DialogTitle>
            <Logo />
            <h2 id="dialog-title">操作权限选择</h2>
            <DialogButton aria-label="最小化"><svg width="12" height="12" fill="#fff" stroke="#555a62"><rect x=".5" y="7.500" width="10" height="3" rx="1" /></svg></DialogButton>
            <DialogButton aria-label="最大化"><svg width="12" height="12" fill="#fff" stroke="#555a62"><path d="M.5 1.500h10v8H.500zM4 4.500h3v2H4z" /></svg></DialogButton>
            <DialogButton aria-label="关闭"><svg width="12" height="12" fill="#fff" stroke="#555a62"><path d="M.5 1.500h3l2.500 2 2.500-2h3v2l-2.500 2.500 2.500 2v2h-3L6 8l-2.500 2h-3V8L3 6 .5 3.500z" /></svg></DialogButton>
          </DialogTitle>
          <DialogBody>
            <DialogTools>
              <Grip />
              <ToolButton><ClearIcon /><span>置空<Code>(<u>R</u>)</Code></span></ToolButton>
              <ToolButton><Floppy /><span>选择<Code>(<u>S</u>)</Code></span></ToolButton>
              <Divider />
              <ToolButton><ExitIcon />关闭</ToolButton>
            </DialogTools>
            <Group>
              <legend>操作权限选择</legend>
              <DialogTree>
                {permissions.map((name, i) => (
                  <Row key={name} onClick={() => setPicked(name)}>
                    <Guide $h $v={i === permissions.length - 1 ? '10px' : '100%'} $w={20}>
                      {name === '更多' && <Toggle sign="+" />}
                    </Guide>
                    <Folder open={name === picked} />
                    <DialogLabel $selected={name === picked}>{name}</DialogLabel>
                  </Row>
                ))}
              </DialogTree>
            </Group>
            <SizeGrip width="10" height="10" fill="#9a9da3"><path d={gripDots} /></SizeGrip>
          </DialogBody>
        </Dialog>
      </Window>
    </Frame>
  );
}
